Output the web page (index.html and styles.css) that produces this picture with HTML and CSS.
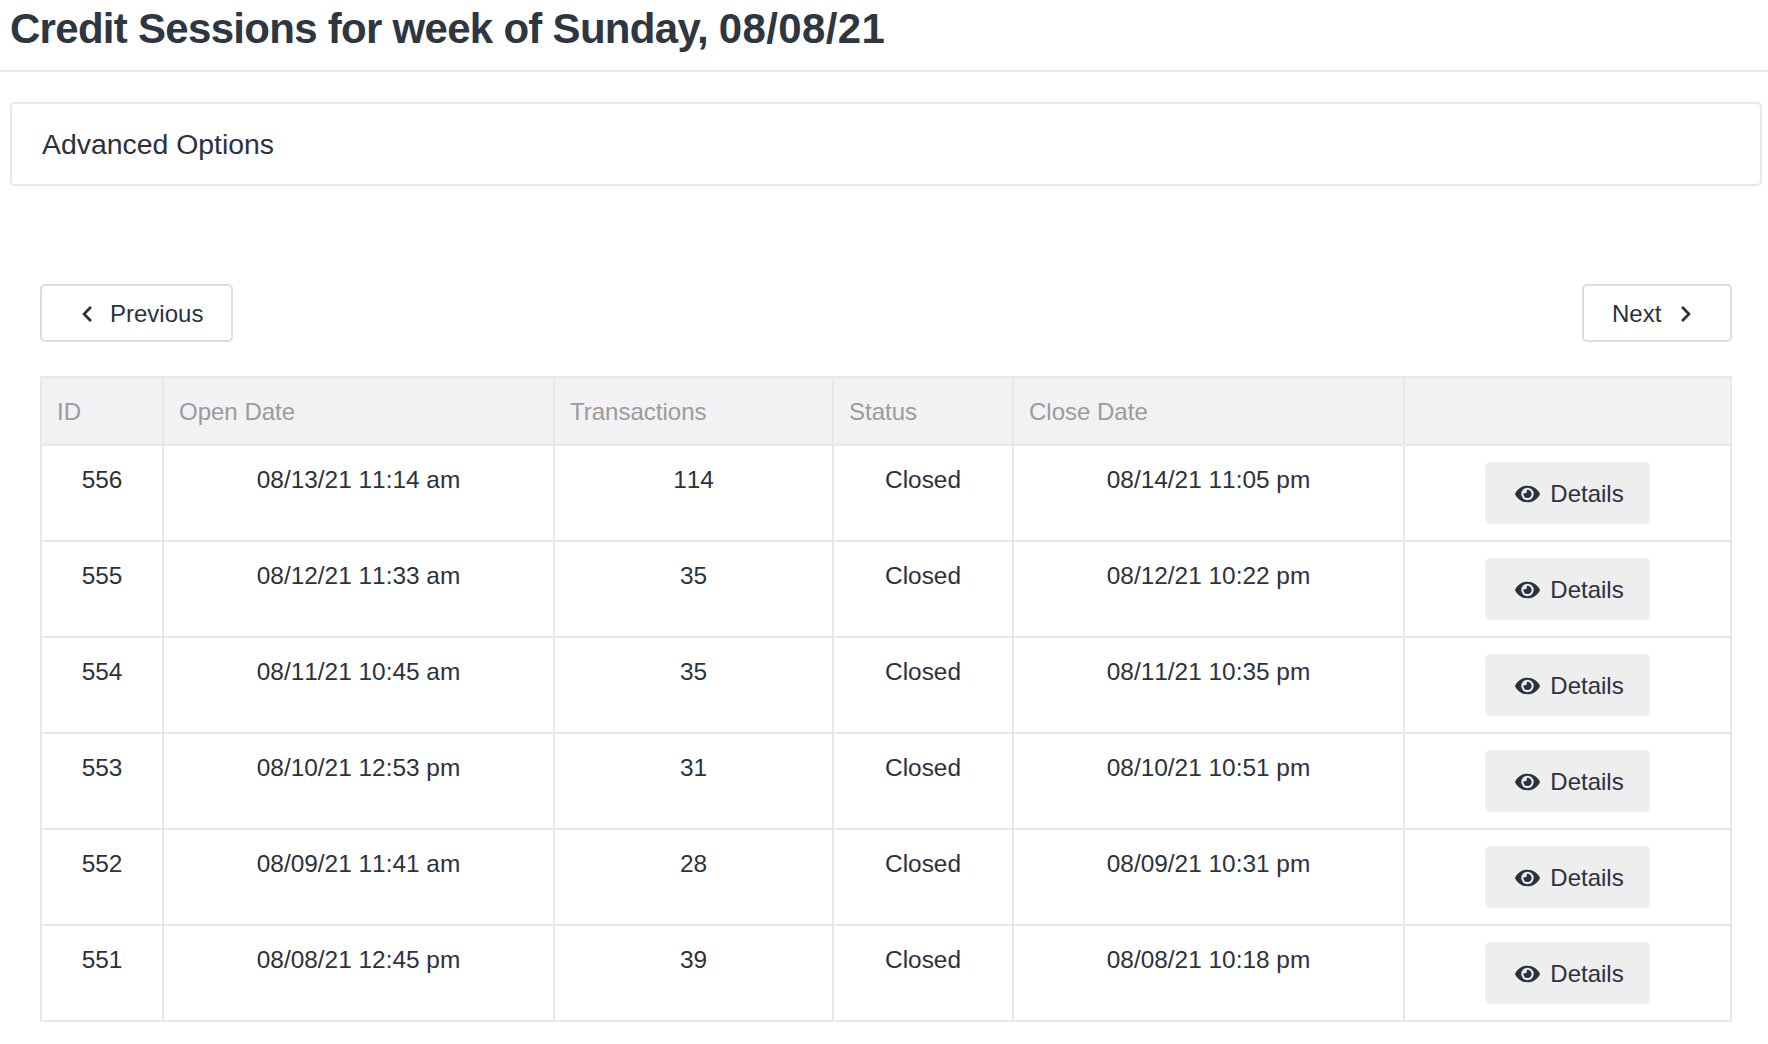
FILE: index.html
```html
<!DOCTYPE html>
<html lang="en">
<head>
<meta charset="utf-8">
<title>Credit Sessions</title>
<link rel="stylesheet" href="styles.css">
</head>
<body>
<svg class="defs" aria-hidden="true">
  <symbol id="eye" viewBox="0 0 576 512"><path d="M572.52 241.4C518.29 135.59 410.93 64 288 64S57.68 135.64 3.48 241.41a32.35 32.35 0 0 0 0 29.19C57.71 376.41 165.07 448 288 448s230.32-71.64 284.52-177.41a32.35 32.35 0 0 0 0-29.19zM288 400a144 144 0 1 1 144-144 143.93 143.93 0 0 1-144 144zm0-240a95.31 95.31 0 0 0-25.31 3.79 47.85 47.85 0 0 1-66.9 66.9A95.78 95.78 0 1 0 288 160z"/></symbol>
</svg>
<header class="page-header"><h1>Credit Sessions for week of Sunday, <span class="week-date">08/08/21</span></h1></header>
<section class="options-card">Advanced Options</section>
<main class="content">
  <nav class="pager">
    <a class="pager-btn prev"><svg class="chev" viewBox="0 0 320 512"><path d="M34.52 239.03L228.87 44.69c9.37-9.37 24.57-9.37 33.94 0l22.67 22.67c9.36 9.36 9.37 24.52.04 33.9L131.49 256l154.02 154.75c9.34 9.38 9.32 24.54-.04 33.9l-22.67 22.67c-9.37 9.37-24.57 9.37-33.94 0L34.52 272.97c-9.37-9.37-9.37-24.57 0-33.94z"/></svg>Previous</a>
    <a class="pager-btn next">Next<svg class="chev" viewBox="0 0 320 512"><path d="M285.476 272.971L91.132 467.314c-9.373 9.373-24.569 9.373-33.941 0l-22.667-22.667c-9.357-9.357-9.375-24.522-.04-33.901L188.505 256 34.484 101.255c-9.335-9.379-9.317-24.544.04-33.901l22.667-22.667c9.373-9.373 24.569-9.373 33.941 0L285.475 239.03c9.373 9.372 9.373 24.568.001 33.941z"/></svg></a>
  </nav>
  <table class="sessions">
    <colgroup><col class="c-id"><col class="c-open"><col class="c-tx"><col class="c-status"><col class="c-close"><col class="c-act"></colgroup>
    <thead><tr><th>ID</th><th>Open Date</th><th>Transactions</th><th>Status</th><th>Close Date</th><th></th></tr></thead>
    <tbody>
      <tr><td>556</td><td>08/13/21 11:14 am</td><td>114</td><td>Closed</td><td>08/14/21 11:05 pm</td><td class="act"><a class="details"><svg class="eye"><use href="#eye"/></svg>Details</a></td></tr>
      <tr><td>555</td><td>08/12/21 11:33 am</td><td>35</td><td>Closed</td><td>08/12/21 10:22 pm</td><td class="act"><a class="details"><svg class="eye"><use href="#eye"/></svg>Details</a></td></tr>
      <tr><td>554</td><td>08/11/21 10:45 am</td><td>35</td><td>Closed</td><td>08/11/21 10:35 pm</td><td class="act"><a class="details"><svg class="eye"><use href="#eye"/></svg>Details</a></td></tr>
      <tr><td>553</td><td>08/10/21 12:53 pm</td><td>31</td><td>Closed</td><td>08/10/21 10:51 pm</td><td class="act"><a class="details"><svg class="eye"><use href="#eye"/></svg>Details</a></td></tr>
      <tr><td>552</td><td>08/09/21 11:41 am</td><td>28</td><td>Closed</td><td>08/09/21 10:31 pm</td><td class="act"><a class="details"><svg class="eye"><use href="#eye"/></svg>Details</a></td></tr>
      <tr><td>551</td><td>08/08/21 12:45 pm</td><td>39</td><td>Closed</td><td>08/08/21 10:18 pm</td><td class="act"><a class="details"><svg class="eye"><use href="#eye"/></svg>Details</a></td></tr>
    </tbody>
  </table>
</main>
</body>
</html>
```

FILE: styles.css
```css
* { box-sizing: border-box; }
html, body { margin: 0; padding: 0; background: #fff; }
body {
  font-family: "Liberation Sans", Arial, sans-serif;
  font-size: 24px;
  color: #2a323d;
  overflow: hidden;
  height: 1044px;
}
.defs { display: none; }
.page-header {
  height: 72px;
  padding: 0 10px;
  border-bottom: 2px solid #e8e8e8;
}
.page-header h1 {
  margin: 0;
  font-size: 42px;
  line-height: 58px;
  font-weight: 700;
  letter-spacing: -0.71px;
  color: #2e3641;
}
.week-date { letter-spacing: 0.35px; }
.options-card {
  margin: 30px 6px 0 10px;
  height: 84px;
  padding: 1px 30px 0;
  border: 2px solid #e8e8e8;
  border-radius: 5px;
  font-size: 28.4px;
  line-height: 78px;
}
.content { padding: 98px 36px 0 40px; }
.pager { display: flex; justify-content: space-between; height: 58px; }
.pager-btn {
  display: flex;
  align-items: center;
  height: 58px;
  padding-top: 2px;
  border: 2px solid #dcdcdc;
  border-radius: 5px;
  font-size: 24px;
}
.prev { width: 193px; padding-left: 38px; gap: 16px; }
.next { width: 150px; padding-left: 28px; gap: 18px; }
.chev { width: 14px; height: 18px; fill: #2a323d; }
.sessions {
  margin-top: 34px;
  width: 1690px;
  table-layout: fixed;
  border-collapse: collapse;
}
.c-id { width: 122px; }
.c-open { width: 391px; }
.c-tx { width: 279px; }
.c-status { width: 180px; }
.c-close { width: 391px; }
.c-act { width: 327px; }
.sessions th, .sessions td { border: 2px solid #e8e8e8; }
.sessions th {
  height: 68px;
  padding: 1px 16px 0 15px;
  background: #f2f2f4;
  color: #9a9b9d;
  font-weight: 400;
  text-align: left;
}
.sessions td {
  height: 96px;
  padding: 17px 16px 0;
  vertical-align: top;
  text-align: center;
  font-size: 24.4px;
  line-height: 34px;
  font-kerning: none;
}
.sessions td.act { padding: 0; vertical-align: middle; font-size: 24px; font-kerning: auto; }
.details {
  display: inline-flex;
  align-items: center;
  justify-content: center;
  gap: 10px;
  width: 165px;
  height: 62px;
  padding: 2px 0 0 4px;
  background: #eeeeee;
  border-radius: 5px;
  vertical-align: middle;
}
.eye { width: 25px; height: 22px; fill: #2a323d; }
```
